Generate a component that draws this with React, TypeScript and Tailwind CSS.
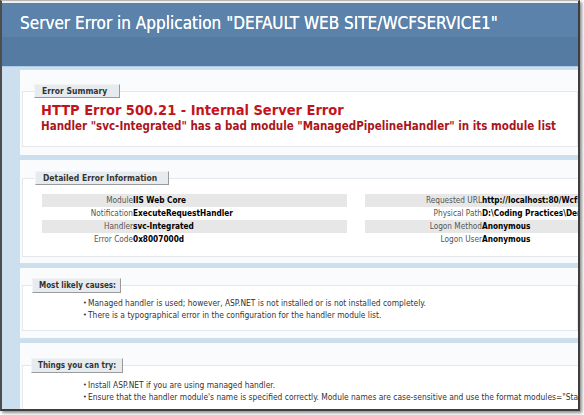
const font = "font-['DejaVu_Sans_Condensed','DejaVu_Sans',sans-serif]";

function Legend({ children, className }: { children: React.ReactNode; className: string }) {
  return (
    <legend
      className={`whitespace-nowrap bg-[#e6ebef] border-t border-l border-t-[#f4f4f4] border-l-[#f4f4f4] border-r border-b border-r-[#9a9a9a] border-b-[#9a9a9a] font-bold text-[#333] ${className}`}
    >
      {children}
    </legend>
  );
}

const leftRows = [
  ["Module", "IIS Web Core"],
  ["Notification", "ExecuteRequestHandler"],
  ["Handler", "svc-Integrated"],
  ["Error Code", "0x8007000d"],
];

const rightRows = [
  ["Requested URL", "http://localhost:80/WcfService1/Service1.svc"],
  ["Physical Path", "D:\\Coding Practices\\Demo\\WcfService1\\Service1.svc"],
  ["Logon Method", "Anonymous"],
  ["Logon User", "Anonymous"],
];

function InfoTable({ rows, width, labelWidth }: { rows: string[][]; width: string; labelWidth: string }) {
  return (
    <div className={`flex flex-col shrink-0 ${width}`}>
      {rows.map(([label, value], i) => (
        <div
          key={label}
          className={`flex h-[13px] items-center whitespace-nowrap text-[8.2px] leading-[13px] ${i % 2 === 0 ? "bg-[#e7e7e7]" : ""}`}
        >
          <span className={`${labelWidth} shrink-0 text-right text-[#555]`}>{label}</span>
          <span className="font-bold text-black">{value}</span>
        </div>
      ))}
    </div>
  );
}

function Bullets({ items }: { items: string[] }) {
  return (
    <ul className="flex flex-col pl-[60px]">
      {items.map((t) => (
        <li key={t} className="flex h-[12px] items-center whitespace-nowrap text-[8.4px] leading-[12px] text-[#333]">
          <span className="w-[5px] shrink-0 text-[7px]">•</span>
          {t}
        </li>
      ))}
    </ul>
  );
}

export default function App() {
  return (
    <div className={`relative w-[584px] h-[415px] bg-white overflow-hidden ${font}`}>
      <div className="w-[580px] h-[411px] overflow-hidden border-t border-t-[#b5b5b5] border-l-2 border-r-2 border-b-2 border-l-[#4d4d4d] border-r-[#3d3d3d] border-b-[#3d3d3d] bg-[#cbdfee] shadow-[2px_2px_3px_rgba(0,0,0,0.45)]">
        <div className="h-[2px] bg-[#eef0f2]" />

        {/* header */}
        <div className="h-[34px] bg-[#5b82ab] pl-[18px] pt-[11px]">
          <h1 className="whitespace-nowrap text-[17px] leading-[18px] text-white [text-shadow:0_0_0.4px_#fff]">
            Server Error in Application "DEFAULT WEB SITE/WCFSERVICE1"
          </h1>
        </div>
        <div className="h-[29px] bg-[#567ba2]" />
        <div className="h-[1px] bg-[#aecbe6]" />

        <div className="flex flex-col gap-[5px] pl-[18px] pt-[3px]">
          {/* error summary */}
          <div className="h-[85px] bg-[#fafbfc] pt-[14px]">
            <fieldset className="ml-[2px] h-[63px] border border-[#e4e8ec] bg-white">
              <Legend className="ml-[11px] w-[86px] h-[14px] pl-[7px] text-[8.5px] leading-[13px]">Error Summary</Legend>
              <div className="pl-[18px] pt-[3px]">
                <h3 className="whitespace-nowrap text-[14.5px] font-bold leading-[18px] text-[#c4141b]">
                  HTTP Error 500.21 - Internal Server Error
                </h3>
                <h4 className="whitespace-nowrap text-[11.5px] font-bold leading-[14px] text-[#aa151c]">
                  Handler "svc-Integrated" has a bad module "ManagedPipelineHandler" in its module list
                </h4>
              </div>
            </fieldset>
          </div>

          {/* detailed info */}
          <div className="h-[103px] bg-[#fafbfc] pt-[11px]">
            <fieldset className="ml-[2px] h-[86px] border border-[#e4e8ec] bg-white">
              <Legend className="ml-[12px] w-[134px] h-[14px] pl-[7px] text-[8.5px] leading-[13px]">Detailed Error Information</Legend>
              <div className="flex gap-[18px] pl-[19px] pt-[9px]">
                <InfoTable rows={leftRows} width="w-[305px]" labelWidth="w-[91px]" />
                <InfoTable rows={rightRows} width="w-[390px]" labelWidth="w-[117px]" />
              </div>
            </fieldset>
          </div>

          {/* causes */}
          <div className="h-[70px] bg-[#fafbfc] pt-[10px]">
            <fieldset className="ml-[2px] h-[53px] border border-[#e4e8ec] bg-white">
              <Legend className="ml-[9px] w-[89px] h-[15px] pl-[6px] text-[8px] leading-[14px]">Most likely causes:</Legend>
              <div className="pt-[4px]">
                <Bullets
                  items={[
                    "Managed handler is used; however, ASP.NET is not installed or is not installed completely.",
                    "There is a typographical error in the configuration for the handler module list.",
                  ]}
                />
              </div>
            </fieldset>
          </div>

          {/* things to try */}
          <div className="h-[80px] bg-[#fafbfc] pt-[15px]">
            <fieldset className="ml-[2px] h-[60px] border border-[#e4e8ec] bg-white">
              <Legend className="ml-[8px] w-[92px] h-[15px] pl-[6px] text-[8px] leading-[14px]">Things you can try:</Legend>
              <div className="pt-[6px]">
                <Bullets
                  items={[
                    "Install ASP.NET if you are using managed handler.",
                    "Ensure that the handler module's name is specified correctly. Module names are case-sensitive and use the format modules=\"StaticFileModule,DefaultDocumentModule\".",
                  ]}
                />
              </div>
            </fieldset>
          </div>
        </div>
      </div>
    </div>
  );
}
